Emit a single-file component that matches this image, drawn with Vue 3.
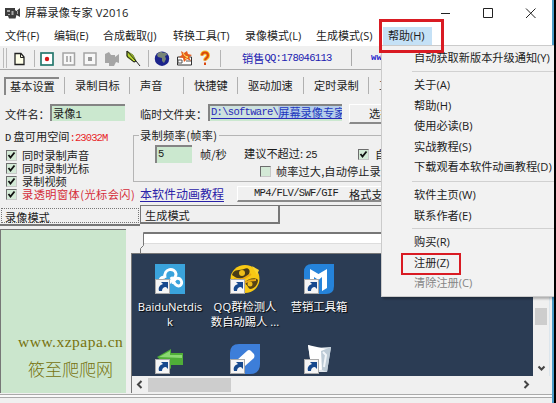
<script setup>
const menus = [
  { t: '文件(F)', w: 49 },
  { t: '编辑(E)', w: 49 },
  { t: '合成截取(J)', w: 70 },
  { t: '转换工具(T)', w: 72 },
  { t: '录像模式(L)', w: 71 },
  { t: '生成模式(S)', w: 67 },
]
const tabs = [
  { t: '录制目标', w: 65 },
  { t: '声音', w: 54 },
  { t: '快捷键', w: 54 },
  { t: '驱动加速', w: 66 },
  { t: '定时录制', w: 65 },
  { t: '工具', w: 60 },
]
const checks = [
  { t: '同时录制声音' },
  { t: '同时录制光标' },
  { t: '录制视频' },
  { t: '录透明窗体(光标会闪)', red: true },
]
const groups = [
  ['自动获取新版本升级通知(Y)'],
  ['关于(A)', '帮助(H)', '使用必读(B)', '实战教程(S)', '下载观看本软件动画教程(D)'],
  ['软件主页(W)', '联系作者(E)'],
  ['购买(R)', '注册(Z)', '清除注册(C)'],
]
const shortcuts = [
  { k: 'baidu', x: 0, y: 0, lines: ['BaiduNetdis', 'k'] },
  { k: 'qq', x: 75, y: 0, lines: ['QQ群检测人', '数自动踢人 ...'] },
  { k: 'box', x: 149, y: 0, lines: ['营销工具箱'] },
  { k: 'arrow', x: 0, y: 80, lines: [] },
  { k: 'tag', x: 75, y: 80, lines: [] },
  { k: 'bin', x: 149, y: 80, lines: [] },
]
</script>

<template>
  <div class="screen">
    <div class="window">
      <header class="title">
        <svg class="cam" width="16" height="14" viewBox="0 0 16 14">
          <path d="M0 2h10v2l1.5 1 3.5-3v9l-3.5-2-1 3.500H4L3 10H0z" fill="#3c3c3c" />
          <path d="M2 4h3v2H2zM6.500 5h2v4h-2zM3 8h2v1H3zM12 5h1v3h-1z" fill="#a8a8a8" />
        </svg>
        <span class="name">屏幕录像专家 V2016</span>
        <svg class="controls" width="98" height="14" viewBox="0 0 98 14" fill="none" stroke="#222" stroke-width="1">
          <path d="M1 7.500h9M43.500 2.500h9v9h-9zM86 2.500l9.500 9.500M95.500 2.500L86 12" />
        </svg>
      </header>

      <nav class="menubar">
        <span v-for="m in menus" :key="m.t" :style="{ width: m.w + 'px' }">{{ m.t }}</span>
        <span class="active">帮助(H)</span>
      </nav>

      <div class="toolbar">
        <i class="grip"></i>
        <svg width="217" height="20" viewBox="8 0 217 20">
          <path d="M15 5.500h6l3 3.500v7.500h-9z" fill="#ffffe8" stroke="#222" stroke-width="1.300" />
          <path d="M20.500 5.500V9.500h3.500" fill="none" stroke="#222" />
          <path d="M34.500 2v17M148.500 2v17M220.500 2v17" stroke="#b5b5b5" />
          <rect x="41" y="5" width="12" height="12" fill="#fff" stroke="#26786e" stroke-width="1.700" />
          <circle cx="47" cy="11" r="2.200" fill="#d61818" />
          <g fill="#f8f8f8" stroke="#a4a4a4" stroke-width="1.500">
            <rect x="63" y="5" width="11.500" height="12" />
            <rect x="84" y="5" width="12" height="12" />
          </g>
          <path d="M67 8v6M70.500 8v6" stroke="#9a9a9a" stroke-width="1.500" />
          <rect x="88" y="9" width="4" height="4" fill="#999" />
          <path d="M105 6l4-2 2 3h4v2l4-3v9l-3-1-2 4h-5v-3h-4z" fill="#a5a5a5" />
          <path d="M127 3l6 4 3 6-2 1-7-5z" fill="#b8d82c" stroke="#526b18" stroke-width=".8" />
          <path d="M127 3v5l7 6 2-1 4 5M127 3l9 10" fill="none" stroke="#222" stroke-width="1" />
          <circle cx="162" cy="10.700" r="7.200" fill="#1c248c" />
          <path d="M157 7c2-4 5-3 6-2 2-1 4 0 4 2l-2 1 1 3-2 4-2-2v-3l-4-1z" fill="#778577" />
          <path d="M177.500 9h14v8h-14z" fill="#fff" stroke="#333" />
          <path d="M178 12h4v3h-4zM186 13h5" fill="none" stroke="#555" />
          <path d="M181 3l3 2 3-2 1 3 4 1-3 2 2 4-4-2-3 3-1-4-4-1 3-2z" fill="#e55c1d" />
          <path d="M183 5l2 3 3 1-3 2" fill="none" stroke="#ffe05a" />
          <path d="M202 7.500c0-4 6-4 6 0 0 2.500-3 2.500-3 5" fill="none" stroke="#f5bd20" stroke-width="4" />
          <path d="M202 7.500c0-4 6-4 6 0 0 2.500-3 2.500-3 5M205 14.500v2.500" fill="none" stroke="#d9480f" stroke-width="2" />
        </svg>
        <span class="sales">销售<span class="m">QQ:178046113</span></span>
        <i class="split"></i>
        <b class="site">www.tlxsoft.com</b>
      </div>

      <div class="tabs">
        <span class="sel">基本设置</span>
        <span v-for="t in tabs" :key="t.t" class="tab" :style="{ width: t.w + 'px' }">{{ t.t }}</span>
      </div>

      <div class="files">
        <span class="l1">文件名：</span>
        <span class="input f1">录像<span class="m">1</span></span>
        <span class="l2">临时文件夹：</span>
        <span class="input f2"><span class="path"><span class="m">D:\software\</span><span class="hl">屏幕录像专家</span></span></span>
        <span class="button choose">选择</span>
      </div>

      <div class="settings">
        <div class="left">
          <div class="disk"><span class="m">D</span>盘可用空间<span class="red m">:23032M</span></div>
          <div v-for="c in checks" :key="c.t" class="check">
            <i class="cb"><svg width="9" height="9" viewBox="0 0 9 9"><path d="M1.500 4l2 2.500 4-5" /></svg></i>
            <span :class="{ red: c.red }">{{ c.t }}</span>
          </div>
        </div>
        <div class="right">
          <fieldset>
            <legend>录制频率(帧率)</legend>
            <div class="rate">
              <span class="input five m">5</span>
              <span class="unit">帧/秒</span>
              <span class="advice">建议不超过: <span class="m">25</span></span>
              <i class="cb"><svg width="9" height="9" viewBox="0 0 9 9"><path d="M1.500 4l2 2.500 4-5" /></svg></i>
              <span class="auto">自动</span>
            </div>
            <div class="over"><i class="cb"></i><span>帧率过大,自动停止录制</span></div>
          </fieldset>
          <div class="tools">
            <span class="link">本软件动画教程</span>
            <span class="button conv"><span class="m">MP4/FLV/SWF/GIF</span><span>格式支持</span></span>
          </div>
        </div>
      </div>

      <div class="modes">
        <span class="mode on"><span>录像模式</span></span>
        <span class="mode off">生成模式</span>
        <span class="rest"></span>
      </div>

      <main>
        <aside></aside>
        <section class="preview">
          <div class="strip">
            <svg width="13" height="22" viewBox="0 0 13 22"><path d="M13 .5h-.5v13l-3 3V22" fill="none" stroke="#777" /></svg>
            <div class="white"></div>
          </div>
          <div class="view">
            <div class="desktop">
              <div v-for="s in shortcuts" :key="s.k" class="shortcut" :style="{ left: s.x + 'px', top: s.y + 10 + 'px' }">
                <svg width="30" height="30" viewBox="0 0 30 30">
                  <template v-if="s.k === 'baidu'">
                    <rect width="30" height="30" fill="#3aa3dc" />
                    <g fill="none" stroke="#fff" stroke-width="3">
                      <path d="M10 14c-2-10 10-11 11-4 0 5-5 6-8 10" />
                      <path d="M10 13c-5 0-6 4-5 8M16 13l4 7c5 5 9-1 5-5-3-2-6 0-7 5" />
                    </g>
                  </template>
                  <template v-else-if="s.k === 'qq'">
                    <ellipse cx="15" cy="15" rx="14.500" ry="14" fill="#f8c914" />
                    <path d="M22 2l7 4-2 5z" fill="#f8d430" />
                    <path d="M2 11C4 4 10 7 14 5s7 1 5 5-9 6-14 3z" fill="#473b18" />
                    <path d="M14 19c4-5 12-6 14-3 0 4-3 9-8 9-2-1-2-4-6-6z" fill="#564316" />
                    <circle cx="12" cy="9" r="3" fill="#edbd19" /><circle cx="20" cy="20" r="2.500" fill="#edbd19" />
                    <path d="M4 15c7 2 11-1 17-5M10 25c2-5 7-9 16-9" fill="none" stroke="#e9a812" stroke-width="2" />
                  </template>
                  <template v-else-if="s.k === 'box'">
                    <path d="M8 0h22v22q0 8-8 8H0V8q0-8 8-8z" fill="#2583da" />
                    <path d="M6 16V5l8.500 5L23 5v19l-5 3V13l-3.500 3L10 13v4z" fill="#fff" />
                  </template>
                  <template v-else-if="s.k === 'arrow'">
                    <path d="M2 13L16 5v4h12v12H16v4z" fill="#4fae38" />
                    <path d="M4 13l11-6v4h12v3z" fill="#8bd873" />
                  </template>
                  <template v-else-if="s.k === 'tag'">
                    <path d="M9 0h21v20q0 10-10 10H0V9Q0 0 9 0z" fill="#3d7ed9" />
                    <path d="M17 7q2-2 4 0l3 3q1 2 0 4l-9 8-8-6z" fill="#fff" />
                  </template>
                  <template v-else>
                    <path d="M4 1l8 3 15-1-4 25H8z" fill="#dfe5eb" />
                    <path d="M4 1l4 27 12-3 2-20z" fill="#fff" />
                    <path d="M17 7l10-4-4 25-5-2z" fill="#bdcbd6" />
                    <path d="M19 8l3 3-2 12" fill="none" stroke="#f1f5f9" stroke-width="2" />
                  </template>
                  <rect x=".5" y="15.500" width="14" height="14" fill="#f5f5f5" stroke="#aaa" />
                  <path d="M4 27c-1-4 1-6 4-7l-2-2h7v7l-2-2c-3 0-4 2-4 4z" fill="#17498d" />
                </svg>
                <div v-for="l in s.lines" :key="l" class="label">{{ l }}</div>
              </div>
            </div>
            <div class="vbar">
              <i class="thumb"></i>
              <svg width="9" height="7" viewBox="0 0 9 7"><path d="M1.500 1.500l3 3 3-3" /></svg>
            </div>
          </div>
          <div class="hbar">
            <svg width="7" height="9" viewBox="0 0 7 9"><path d="M5.500 1l-3.500 3.500L5.500 8" /></svg>
            <i class="thumb"></i>
            <svg class="next" width="7" height="9" viewBox="0 0 7 9"><path d="M1.500 1l3.500 3.500L1.500 8" /></svg>
          </div>
        </section>
      </main>
      <footer></footer>
    </div>

    <div class="watermark">
      <div class="url">www.xzpapa.cn</div>
      <div class="brand">筱至爬爬网</div>
    </div>

    <div class="dropdown">
      <ul v-for="(g, i) in groups" :key="i" :class="'g' + i">
        <li v-for="t in g" :key="t" :class="{ dim: t === '清除注册(C)' }">{{ t }}</li>
      </ul>
    </div>
    <div class="mark help"></div>
    <div class="mark register"></div>
  </div>
</template>

<style>
body { margin: 0; }
</style>

<style scoped>
* { box-sizing: border-box; }
.screen { position: relative; width: 556px; height: 403px; overflow: hidden; background: #000; color: #1c1c1c; font: 11.200px/14px "Noto Sans CJK SC", sans-serif; white-space: nowrap; }
.window { width: 554px; height: 403px; overflow: hidden; background: #f0f0f0; border-right: 2px solid #4d9cc8; display: flex; flex-direction: column; }
.window > * { flex-shrink: 0; }
svg { display: block; flex-shrink: 0; }
.title { height: 26px; background: #fff; display: flex; align-items: center; padding-left: 5px; }
.name { margin-left: 4px; width: 410px; font: 11.200px/14px "Open Sans", "Noto Sans CJK SC", sans-serif; letter-spacing: .1px; }
.controls { margin-left: 5px; }
.menubar { height: 20px; background: #fff; display: flex; align-items: center; padding-left: 5px; font: 11px/14px "Open Sans", "Noto Sans CJK SC", sans-serif; }
.active { height: 18px; line-height: 18px; width: 49px; padding-left: 5px; background: #c5e1f6; }
.toolbar { height: 24px; border-bottom: 1px solid #aaa; display: flex; align-items: center; }
.grip { width: 4px; height: 20px; margin: 0 1px 0 3px; border-left: 1px solid #bbb; border-right: 1px solid #bbb; }
.sales { width: 109px; margin-left: 17px; color: #2020b0; display: flex; }
.m { font: 10.500px/14px "Liberation Mono", monospace; letter-spacing: -.7px; }
.split { width: 1px; height: 17px; background: #aaa; }
.site { margin-left: 19px; font: bold 9px/14px "Liberation Mono", monospace; color: #2020cc; }
.tabs { height: 31px; display: flex; align-items: center; padding: 0 0 1px 4px; }
.sel { width: 55px; height: 18px; line-height: 15px; padding-left: 4px; border-top: 2px solid #888; border-left: 2px solid #888; margin-right: 5px; margin-top: 1px; }
.tab { height: 17px; line-height: 17px; padding-left: 10px; border-left: 1px solid #b0b0b0; }
.files { height: 26px; display: flex; align-items: center; padding-left: 5px; }
.l1 { width: 45px; }
.input { background: #cbe8cf; border-top: 2px solid #848484; border-left: 2px solid #848484; overflow: hidden; }
.f1 { width: 75px; height: 17px; line-height: 14px; padding-left: 1px; margin-bottom: 3px; }
.l2 { width: 68px; margin-left: 15px; }
.f2 { width: 134px; height: 17px; padding-left: 1px; margin-bottom: 3px; }
.path { display: flex; line-height: 12px; height: 13px; color: #2a2ab8; border-bottom: 1px solid #2a2ab8; }
.path .m { line-height: 12px; background: #cde2df; }
.hl { background: #b5cdea; color: #1e38bd; }
.button { border-bottom: 2px solid #8a8a8a; border-left: 1px solid #fff; border-top: 1px solid #fff; }
.choose { width: 60px; height: 20px; line-height: 17px; margin-left: 7px; padding-left: 19px; }
.settings { height: 79px; display: flex; }
.left { width: 133px; padding: 2px 0 0 5px; }
.disk { height: 14px; margin-bottom: 6px; line-height: 14px; }
.disk > .m:first-child { margin-right: 3px; }
.disk .red { color: #e82428; letter-spacing: -.9px; }
.check { height: 13px; display: flex; align-items: center; padding-left: 1px; line-height: 13px; }
.check > span { margin-left: 5px; }
.check .red { color: #d52b38; letter-spacing: .45px; }
.cb { width: 11px; height: 11px; flex-shrink: 0; background: #d3e9d6; border: 1px solid #c8c8c8; border-top-color: #6d6d6d; border-left-color: #6d6d6d; }
.cb path { fill: none; stroke: #111; stroke-width: 1.800; }
.right { flex: 1; padding-top: 1px; overflow: hidden; }
fieldset { border: 1px solid #b5b5b5; width: 300px; height: 54px; margin: 0; padding: 0; min-width: 0; }
legend { margin-left: 5px; padding: 0 1px; height: 14px; letter-spacing: .35px; }
.rate { display: flex; align-items: center; height: 18px; margin-top: 3px; padding-left: 21px; }
.five { width: 37px; height: 18px; line-height: 14px; padding-left: 1px; }
.unit { width: 44px; margin-left: 8px; }
.advice { width: 114px; }
.auto { margin-left: 6px; }
.over { height: 16px; display: flex; align-items: center; padding-left: 126px; }
.over span { margin-left: 5px; letter-spacing: .1px; }
.tools { display: flex; align-items: center; height: 18px; padding-left: 7px; margin-top: 3px; }
.link { font-size: 12px; line-height: 14px; width: 84px; color: #2a22a8; border-bottom: 1px solid #2a22a8; }
.conv { display: flex; align-items: center; margin-left: 13px; width: 170px; height: 16px; padding-left: 16px; }
.conv .m { width: 95px; line-height: 13px; }
.modes { height: 24px; display: flex; margin-top: -1px; }
.mode { padding-left: 5px; line-height: 15px; }
.on { width: 140px; border-bottom: 2px solid #777; padding: 3px 1px 1px 1px; height: 21px; }
.on > span { display: block; height: 15px; line-height: 16px; border: 1px dotted #777; padding-left: 3px; }
.off { width: 140px; height: 19px; line-height: 19px; border: 1px solid #777; border-width: 1px 2px 2px 1px; padding-left: 4px; }
.rest { flex: 1; border-top: 1px solid #777; height: 1px; }
main { display: flex; height: 165px; }
aside { width: 126px; height: 164px; background: #cbe6cd; border-left: 1px solid #777; border-top: 1px solid #777; margin-right: 5px; }
.preview { flex: 1; }
.strip { height: 24px; display: flex; padding-top: 3px; }
.white { flex: 1; height: 12px; background: #fff; border-top: 2px solid #777; border-bottom: 1px solid #ddd; }
.view { display: flex; height: 123px; }
.desktop { position: relative; width: 402px; height: 123px; overflow: hidden; background: #2b3c54; border-top: 1px solid #777; border-left: 1px solid #777; }
.shortcut { position: absolute; width: 76px; display: flex; flex-direction: column; align-items: center; }
.shortcut svg { margin-bottom: 5px; }
.label { height: 15px; color: #fff; font: 11.300px/15px "Open Sans", "Noto Sans CJK SC", sans-serif; text-shadow: 1px 1px 1px #000; }
.vbar { width: 17px; padding: 55px 2px 0; border-right: 1px solid #dce6ed; }
.vbar .thumb { display: block; height: 17px; background: #cdcdcd; }
.vbar svg { margin: 40px 0 0 2px; }
.vbar path, .hbar path { fill: none; stroke: #444; stroke-width: 2; }
.hbar { display: flex; align-items: center; height: 17px; border-left: 1px solid #777; padding-left: 4px; }
.hbar .thumb { width: 83px; height: 14px; margin-left: 5px; background: #cdcdcd; }
.next { margin-left: 292px; }
footer { height: 10px; border-top: 1px solid #aaa; }
footer::before { content: ""; display: block; height: 2px; border-bottom: 1px solid #aaa; background: #fafafa; }
.watermark { position: absolute; left: 18px; top: 333px; width: 106px; color: #77720d; }
.url { font: 15.500px/18px "Liberation Serif", serif; letter-spacing: .5px; }
.brand { font-size: 17px; line-height: 22px; margin: 7px 0 0 10px; font-weight: 300; }
.dropdown { position: absolute; left: 381px; top: 45px; width: 173px; height: 252px; background: #f2f2f2; border: 1px solid #cbcbcb; border-right: 0; box-shadow: 2px 2px 2px #0004; padding: 0 0 0 30px; }
ul { margin: 0; padding: 0 0 0 2px; list-style: none; }
ul + ul { border-top: 1px solid #d1d1d1; }
li { height: 20.500px; font: 11.200px/20.500px "Open Sans", "Noto Sans CJK SC", sans-serif; }
.g0 { padding-top: 2px; height: 25px; }
.g1 { padding-top: 3px; height: 110px; }
.g2 { padding-top: 3px; height: 47px; }
.g3 { padding-top: 3px; }
.dim { color: #858585; }
.mark { position: absolute; border: 3px solid #d91b23; }
.help { left: 379px; top: 19px; width: 65px; height: 34px; }
.register { left: 401px; top: 253px; width: 60px; height: 22px; border-width: 2px; }
</style>
